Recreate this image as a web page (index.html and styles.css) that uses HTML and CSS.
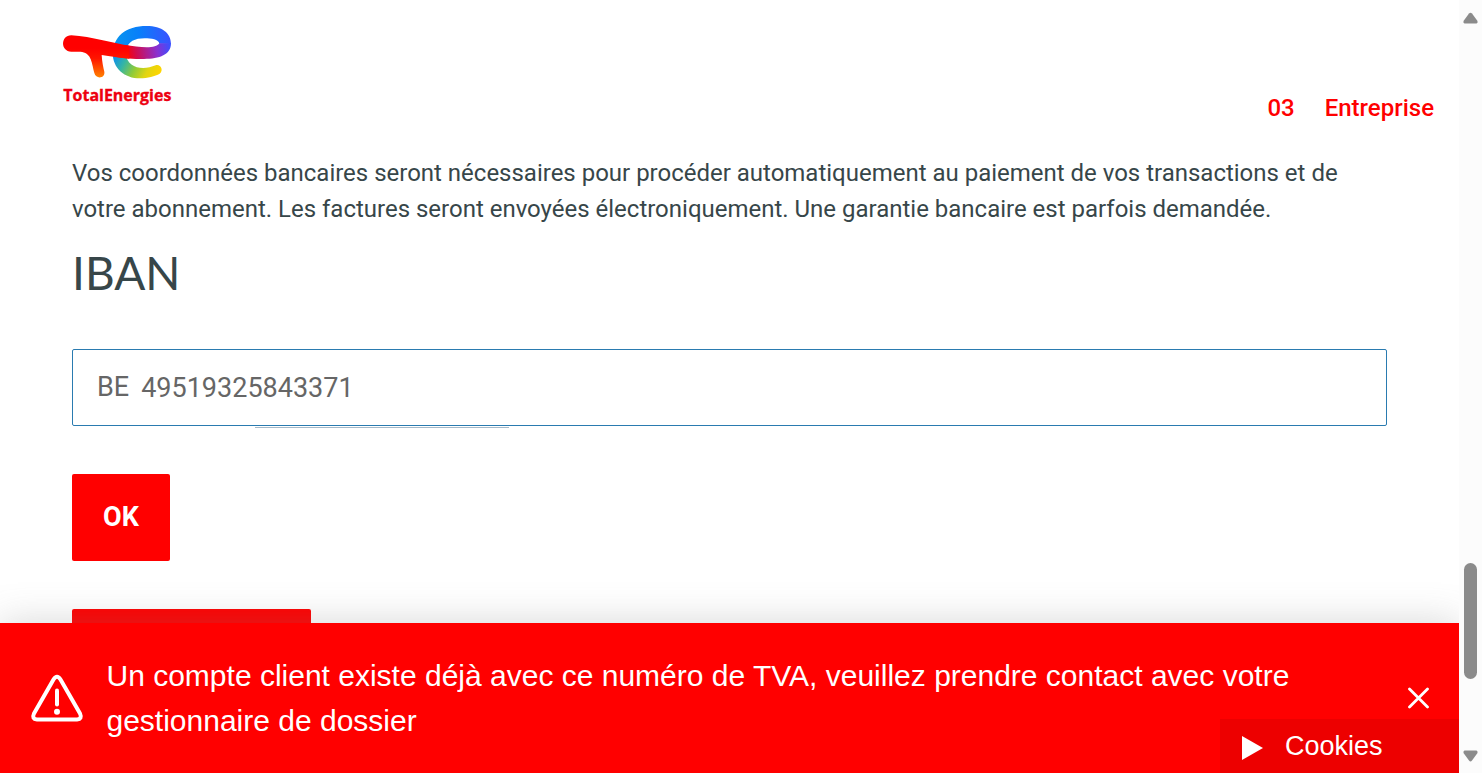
FILE: index.html
```html
<!DOCTYPE html>
<html lang="fr">
<head>
<meta charset="utf-8">
<title>TotalEnergies</title>
<link rel="stylesheet" href="styles.css">
</head>
<body>
<div class="page">
  <main class="content">
    <header class="header">
      <svg class="logo" viewBox="0 0 420 300" width="140" height="100">
        <defs>
          <linearGradient id="tail" gradientUnits="userSpaceOnUse" x1="196" y1="115" x2="325" y2="185"><stop offset="0" stop-color="#0a8df0"/><stop offset=".25" stop-color="#35b5a5"/><stop offset=".5" stop-color="#8fcb38"/><stop offset=".75" stop-color="#e2d510"/><stop offset="1" stop-color="#ffd500"/></linearGradient>
          <linearGradient id="loop" gradientUnits="userSpaceOnUse" x1="188" y1="0" x2="363" y2="0"><stop offset="0" stop-color="#0896ed"/><stop offset=".45" stop-color="#087ffa"/><stop offset="1" stop-color="#3b50ff"/></linearGradient>
          <linearGradient id="bar" gradientUnits="userSpaceOnUse" x1="225" y1="115" x2="360" y2="92"><stop offset="0" stop-color="#f00"/><stop offset=".25" stop-color="#d00d50"/><stop offset=".7" stop-color="#8a30d0"/><stop offset="1" stop-color="#3b50ff"/></linearGradient>
          <linearGradient id="stem" gradientUnits="userSpaceOnUse" x1="0" y1="100" x2="0" y2="187"><stop offset="0" stop-color="#f00"/><stop offset=".35" stop-color="#ff1500"/><stop offset="1" stop-color="#ff8200"/></linearGradient>
        </defs>
        <path d="M188 113C188 160 224 190 270 190C293 189 315 184 329 176C342 167 332 146 317 151C280 166 232 162 226 113Z" fill="url(#tail)"/>
        <path d="M188 120C188 65 227 33 290 33C336 33 363 54 363 87L328 86C326 73 304 70 284 70C255 70 234 79 228 105L226 120Z" fill="url(#loop)"/>
        <path d="M225 90C268 97 318 103 328 85H363C363 119 329 132 282 132C250 132 220 129 195 125Z" fill="url(#bar)"/>
        <path d="M64 61C128 65 184 84 238 92V131C210 129 180 124 155 120C156 139 160 158 163 170C166 190 138 194 133 174C124 137 123 113 91 110H64C31 110 31 61 64 61Z" fill="url(#stem)"/>
        <text class="logo-name" x="40" y="258" textLength="324" lengthAdjust="spacingAndGlyphs">TotalEnergies</text>
      </svg>
      <div class="step"><span>03</span><span>Entreprise</span></div>
    </header>
    <section class="form">
      <p class="intro"><span class="line">Vos coordonnées bancaires seront nécessaires pour procéder automatiquement au paiement de vos transactions et de</span><span class="line">votre abonnement. Les factures seront envoyées électroniquement. Une garantie bancaire est parfois demandée.</span></p>
      <h1 class="title">IBAN</h1>
      <div class="field"><span class="prefix">BE</span><span class="value">49519325843371</span></div>
      <div class="underline"></div>
      <button class="ok">OK</button>
      <div class="next"></div>
    </section>
    <aside class="alert">
      <svg class="warn" viewBox="0 0 54 52" width="54" height="52" fill="none" stroke="#fff" stroke-width="4" stroke-linecap="round" stroke-linejoin="round"><path d="M23.500 7.500Q27 2 30.500 7.500L50 41.500Q52.500 47 47 47.500H7Q1.500 47 4 41.500Z"/><path d="M27 18.500v14"/><circle cx="27" cy="39.800" r="3" fill="#fff" stroke="none"/></svg>
      <p class="message"><span class="line">Un compte client existe déjà avec ce numéro de TVA, veuillez prendre contact avec votre</span><span class="line">gestionnaire de dossier</span></p>
      <svg class="close" viewBox="0 0 22 22" width="22" height="22" fill="none" stroke="#fff" stroke-width="2.800" stroke-linecap="round"><path d="M2.500 2l18 18M20.500 2l-18 18"/></svg>
    </aside>
    <div class="cookies"><svg width="21" height="24" viewBox="0 0 21 24"><path d="M0 0L21 12L0 24Z" fill="#fff"/></svg><span>Cookies</span></div>
  </main>
  <div class="scrollbar">
    <svg width="23" height="773" viewBox="0 0 23 773" fill="#8b8b8b"><path d="M10 13.500Q11.500 12 13 13.500L18.500 21Q19 23 17.500 23.500H5.500Q4 23 4.500 21Z"/><rect x="5" y="563" width="13" height="116" rx="6.500"/><path d="M5.500 750.500H17.500Q19 751 18.500 753L13 760.500Q11.500 762.500 10 760.500L4.500 753Q4 751 5.500 750.500Z"/></svg>
  </div>
</div>
</body>
</html>
```
FILE: styles.css
```css
* { box-sizing: border-box; }
body { margin: 0; background: #fff; font-family: Roboto, sans-serif; color: #374649; overflow: hidden; }
p, h1 { margin: 0; }
.page { display: flex; width: 1482px; height: 773px; }
.content { position: relative; display: flex; flex-direction: column; width: 1459px; height: 773px; overflow: hidden; }
.header { display: flex; flex: none; justify-content: space-between; align-items: flex-start; height: 155px; padding: 15px 25px 0 50px; }
.logo { display: block; }
.logo-name { font: 700 46px "Open Sans", sans-serif; fill: #ed0010; stroke: #ed0010; stroke-width: 1px; }
.step { display: flex; gap: 30px; margin-top: 78px; font-size: 24px; line-height: 30px; font-weight: 500; color: #f00; }
.form { display: flex; flex-direction: column; align-items: flex-start; height: 468px; flex: none; padding-left: 72px; overflow: hidden; }
.form > * { flex: none; }
.intro { font-size: 23.99px; line-height: 36px; }
.line { display: block; white-space: nowrap; }
.title { margin-top: 16px; height: 61px; font: 400 46px/60px Lato, sans-serif; }
.field { display: flex; align-items: center; gap: 12px; width: 1315px; height: 77px; margin-top: 45px; padding: 0 24px; border: 1px solid #2a7bb0; border-radius: 2px; font-size: 27px; color: #666; }
.prefix { padding-bottom: 2px; }
.underline { width: 254px; height: 1px; margin: 1px 0 0 183px; background: #a5b9c8; }
.ok { width: 98px; height: 87px; margin-top: 46px; padding: 0 0 2px; border: 0; border-radius: 2px; background: #f00; color: #fff; font: 700 27px Roboto, sans-serif; }
.next { width: 239px; height: 60px; margin-top: 48px; border-radius: 2px; background: #f00; }
.alert { display: flex; align-items: center; flex: none; height: 150px; padding: 0 30px; background: #f00; color: #fff; box-shadow: 0 0 36px rgba(120, 120, 120, .3); position: relative; }
.message { flex: 1; margin-left: 22.5px; font: 30.01px/45px "Liberation Sans", sans-serif; }
.cookies { position: absolute; right: 0; bottom: 0; display: flex; align-items: center; gap: 22px; width: 239px; height: 54px; padding-left: 22px; background: #ed0000; color: #fff; font: 27px/52px "Liberation Sans", sans-serif; }
.cookies svg { margin-top: 3px; }
.scrollbar { width: 23px; background: #fcfcfc; }
.scrollbar svg { display: block; }
```
